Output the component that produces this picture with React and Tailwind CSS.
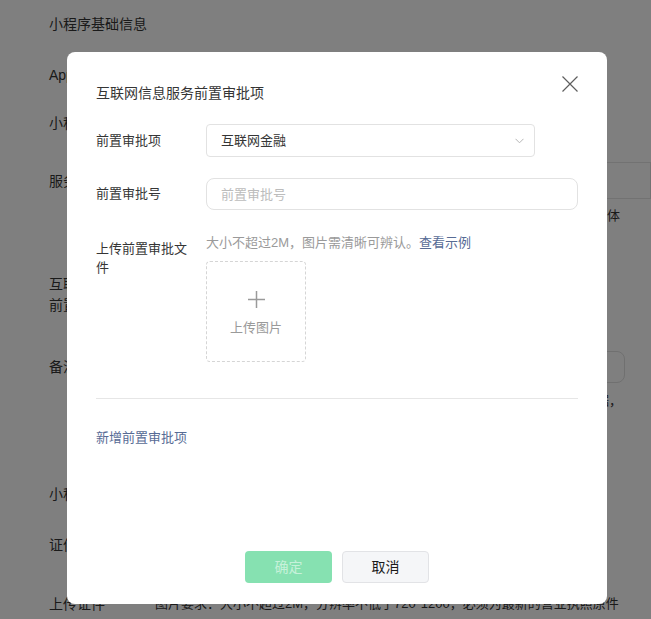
function CloseIcon() {
  return (
    <svg width="16" height="16" viewBox="0 0 16 16" fill="none">
      <path d="M0.5 0.5L15.5 15.5M15.5 0.5L0.5 15.5" stroke="#5e5e5e" strokeWidth="1.2" />
    </svg>
  );
}

function Chevron() {
  return (
    <svg width="9" height="6" viewBox="0 0 9 6" fill="none">
      <path d="M0.5 0.8L4.5 4.8L8.5 0.8" stroke="#b5b5b5" strokeWidth="1" />
    </svg>
  );
}

function Plus() {
  return (
    <svg width="17" height="17" viewBox="0 0 17 17" fill="none">
      <path d="M8.5 0V17M0 8.5H17" stroke="#9a9a9a" strokeWidth="1.5" />
    </svg>
  );
}

function Page() {
  return (
    <div className="pl-[49px] text-[14px] leading-5 text-[#353535]">
      <h2 className="pt-[14px]">小程序基础信息</h2>

      <div className="mt-[31px] flex">
        <span className="w-[106px]">AppID</span>
        <span>wx3f8a91c2d7b6e045</span>
      </div>

      <div className="mt-[28px] flex">
        <span className="w-[106px]">小程序名称</span>
        <span>示例小程序</span>
      </div>

      <div className="mt-[29px] flex items-center">
        <span className="w-[106px]">服务类目</span>
        <div className="h-[37px] w-[520px] shrink-0 border border-[#e5e5e5]" />
      </div>
      <p className="ml-[106px] mt-[7px] w-[465px] text-right text-[13px]">
        请根据小程序实际提供的服务选择类目，需与主体
      </p>

      <div className="mt-[48px] flex">
        <span className="w-[100px] leading-[21px]">互联网信息服务前置审批项</span>
      </div>

      <div className="mt-[35px] flex items-center">
        <span className="w-[106px]">备注</span>
        <div className="h-8 w-[470px] shrink-0 rounded-lg border border-[#e0e0e0]" />
      </div>
      <p className="ml-[106px] mt-[8px] w-[467px] text-right text-[13px]">
        如有需要，可补充说明相关情况作为审核依据，
      </p>

      <h2 className="mt-[73px]">小程序主体信息</h2>

      <div className="mt-[31px] flex">
        <span className="w-[106px]">证件类型</span>
        <span>营业执照</span>
      </div>

      <div className="mt-[39px] flex">
        <span className="w-[106px]">上传证件</span>
        <span className="text-[13px]">图片要求：大小不超过2M，分辨率不低于720*1200，必须为最新的营业执照原件</span>
      </div>
    </div>
  );
}

function Dialog() {
  return (
    <div className="flex h-[552px] w-[540px] flex-col rounded-lg bg-white px-[29px] pb-[21px] pt-[31px] text-[#353535]">
      <div className="flex items-start justify-between">
        <h3 className="text-[14px] leading-5">互联网信息服务前置审批项</h3>
        <button className="-mt-[7px]">
          <CloseIcon />
        </button>
      </div>

      <div className="mt-[21px] flex items-center">
        <label className="w-[110px] text-[13px] leading-5">前置审批项</label>
        <div className="flex h-[33px] w-[329px] items-center justify-between rounded border border-[#e2e2e2] pl-[14px] pr-[10px]">
          <span className="text-[13px] leading-5">互联网金融</span>
          <Chevron />
        </div>
      </div>

      <div className="mt-[21px] flex items-center">
        <label className="w-[110px] text-[13px] leading-5">前置审批号</label>
        <input
          className="h-8 flex-1 rounded-lg border border-[#e2e2e2] px-[14px] text-[13px] placeholder:text-[#bcbcbc] focus:outline-none"
          placeholder="前置审批号"
        />
      </div>

      <div className="mt-[23px] flex items-start">
        <label className="mr-[10px] w-[100px] pt-[6px] text-[13px] leading-[19px]">上传前置审批文件</label>
        <div>
          <p className="text-[13px] leading-5 text-[#9a9a9a]">
            大小不超过2M，图片需清晰可辨认。<a className="text-[#576b95]">查看示例</a>
          </p>
          <div className="mt-2 flex h-[101px] w-[100px] flex-col items-center rounded border border-dashed border-[#d5d5d5] pt-[29px]">
            <Plus />
            <span className="mt-[10px] text-[13px] leading-5 text-[#9a9a9a]">上传图片</span>
          </div>
        </div>
      </div>

      <div className="mt-[36px] h-px bg-[#e6e6e6]" />

      <a className="mt-[29px] text-[13px] leading-5 text-[#576b95]">新增前置审批项</a>

      <div className="mt-auto flex justify-center gap-[10px]">
        <button className="h-8 w-[87px] rounded bg-[#86e1b1] text-[14px] text-[#c6f1da]">确定</button>
        <button className="h-8 w-[87px] rounded border border-[#e2e3e6] bg-[#f5f6f8] text-[14px] text-[#1a1a1a]">取消</button>
      </div>
    </div>
  );
}

export default function App() {
  return (
    <div className="relative h-[619px] overflow-hidden bg-white font-['Liberation_Sans','Noto_Sans_CJK_SC',sans-serif]">
      <Page />
      <div className="absolute inset-0 bg-black/50 pl-[67px] pt-[52px]">
        <Dialog />
      </div>
    </div>
  );
}
